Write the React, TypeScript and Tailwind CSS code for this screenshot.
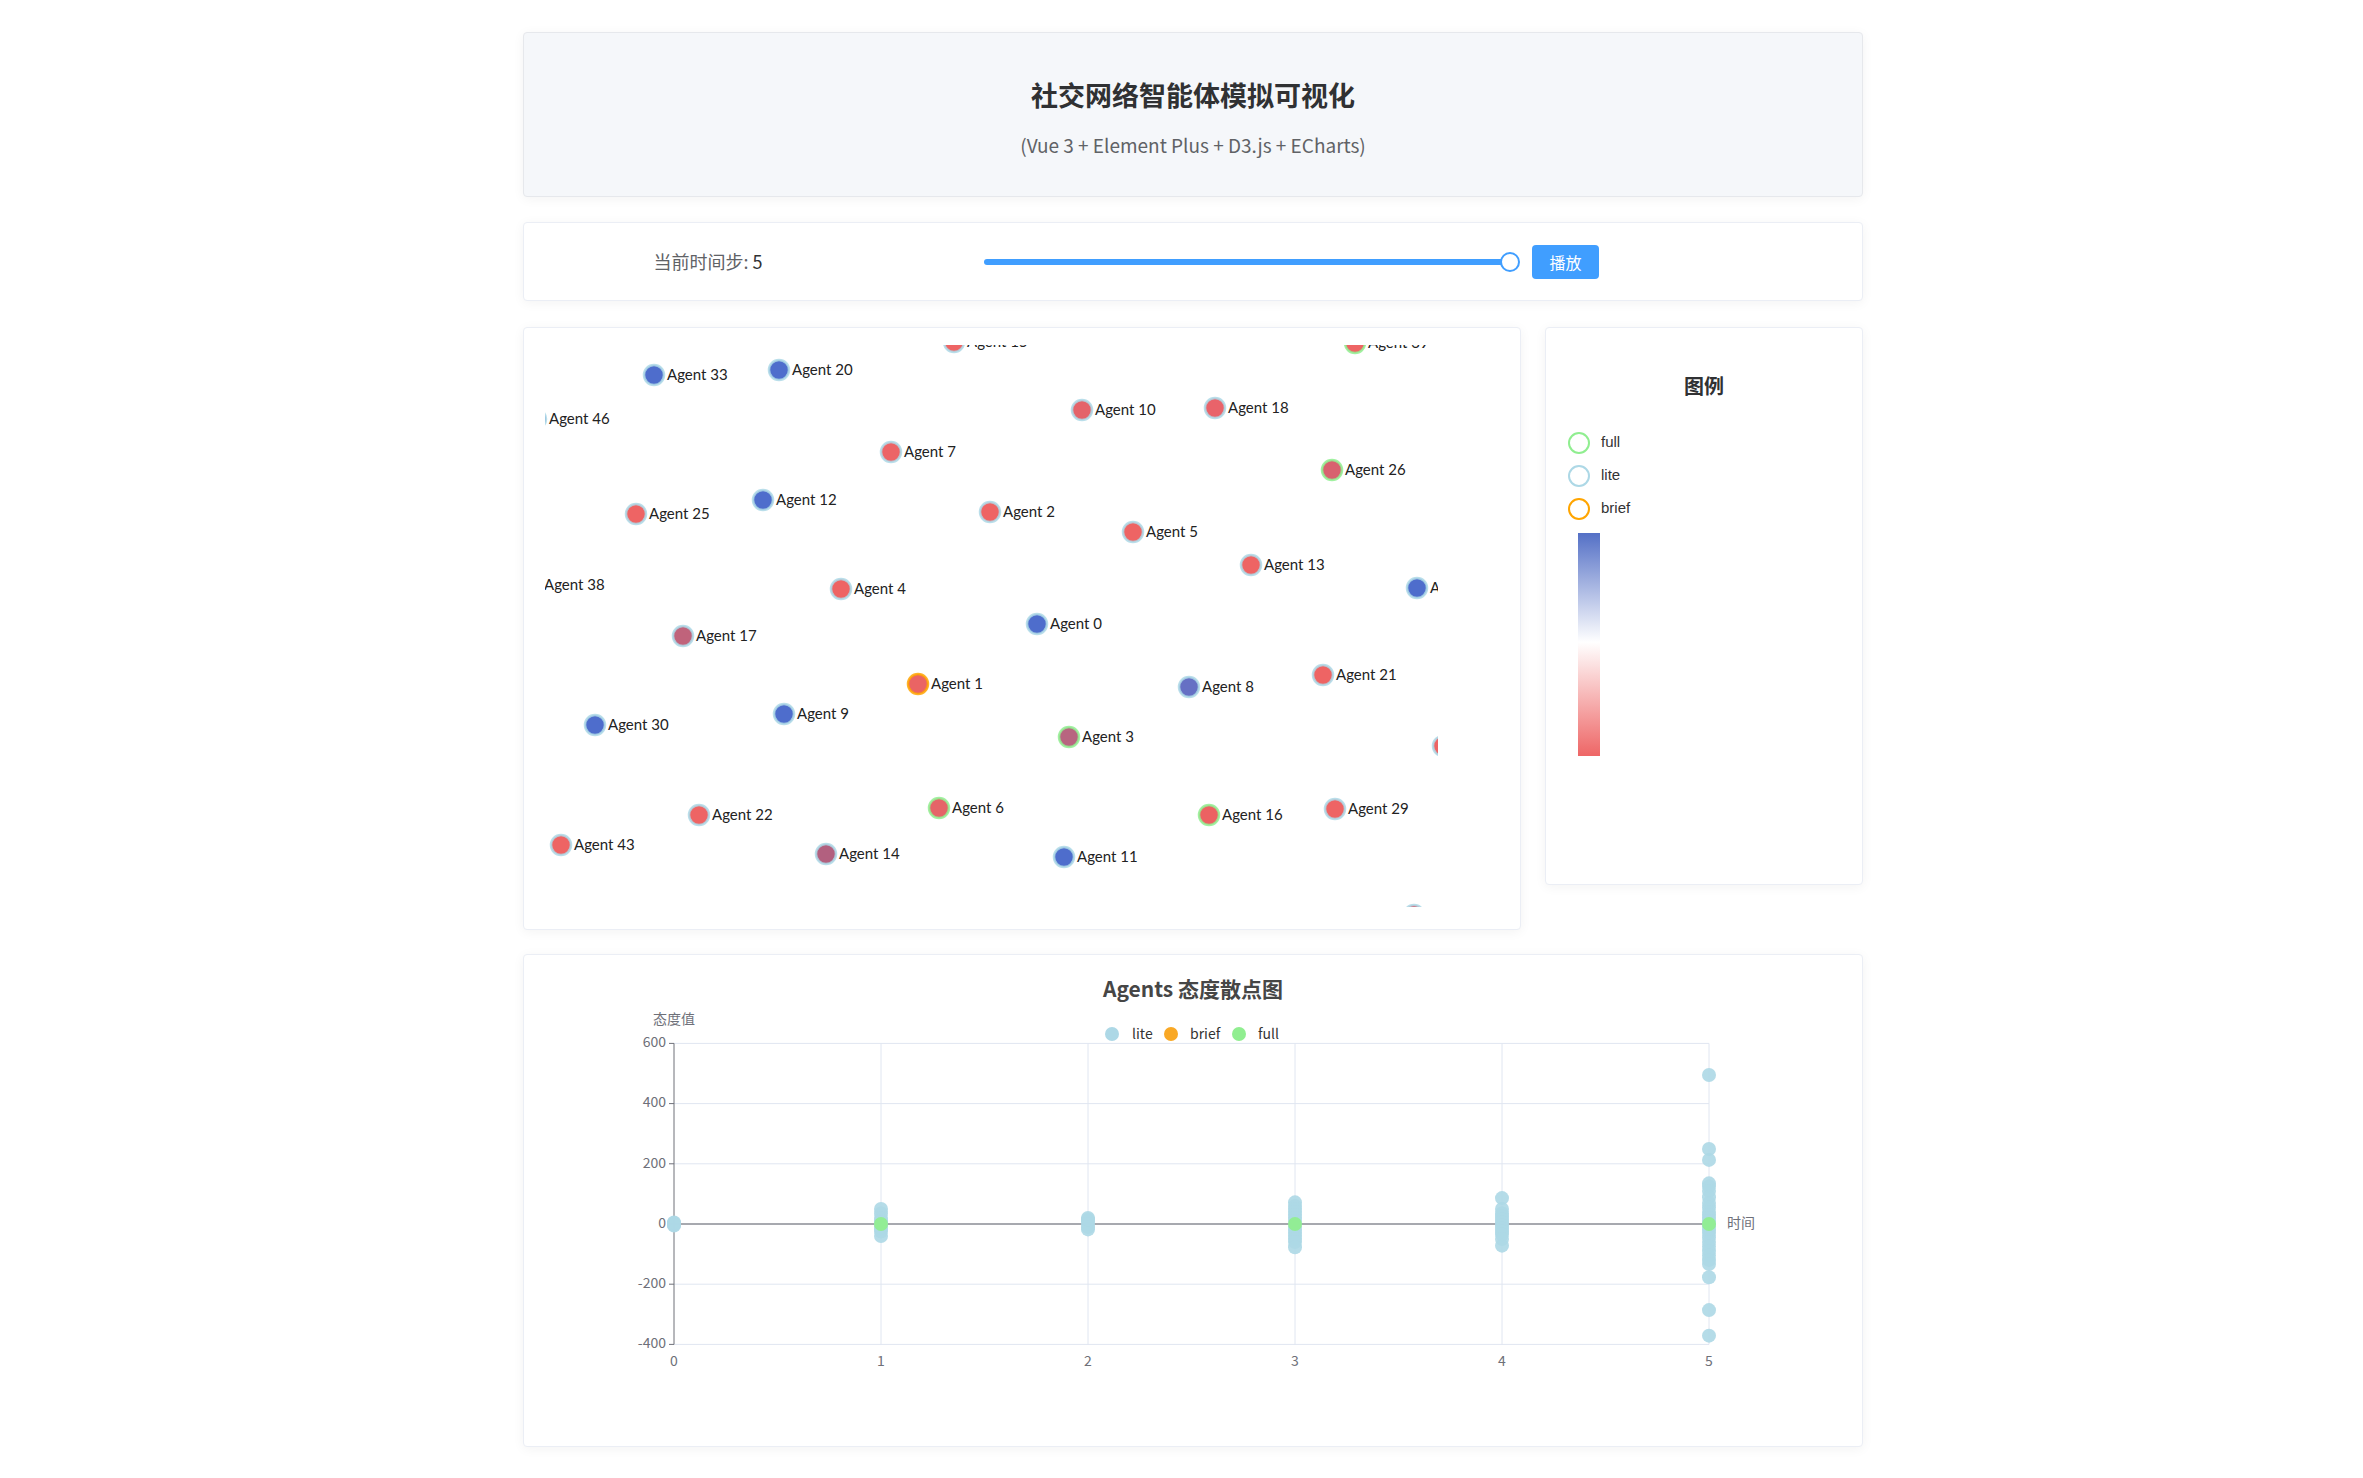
import React from 'react'

type Node = { id: number | string; x: number; y: number; fill: string; stroke: string }

const BLUE = '#4e6dcc'
const RED = '#ee6464'
const LITE = '#add8e6'
const FULL = '#90ee90'
const BRIEF = '#ffa500'

const nodes: Node[] = [
  { id: 15, x: 409, y: -3, fill: RED, stroke: LITE },
  { id: 39, x: 810, y: -2, fill: RED, stroke: FULL },
  { id: 33, x: 109, y: 30, fill: BLUE, stroke: LITE },
  { id: 20, x: 234, y: 25, fill: BLUE, stroke: LITE },
  { id: 46, x: -9, y: 74, fill: BLUE, stroke: LITE },
  { id: 10, x: 537, y: 65, fill: '#e4636a', stroke: LITE },
  { id: 18, x: 670, y: 63, fill: '#e9636a', stroke: LITE },
  { id: 7, x: 346, y: 107, fill: '#ec6467', stroke: LITE },
  { id: 26, x: 787, y: 125, fill: '#d8616f', stroke: FULL },
  { id: 25, x: 91, y: 169, fill: RED, stroke: LITE },
  { id: 12, x: 218, y: 155, fill: BLUE, stroke: LITE },
  { id: 2, x: 445, y: 167, fill: RED, stroke: LITE },
  { id: 5, x: 588, y: 187, fill: RED, stroke: LITE },
  { id: 13, x: 706, y: 220, fill: RED, stroke: LITE },
  { id: 38, x: -14, y: 240, fill: RED, stroke: LITE },
  { id: 4, x: 296, y: 244, fill: RED, stroke: LITE },
  { id: 44, x: 872, y: 243, fill: BLUE, stroke: LITE },
  { id: 0, x: 492, y: 279, fill: BLUE, stroke: LITE },
  { id: 17, x: 138, y: 291, fill: '#c0637b', stroke: LITE },
  { id: 1, x: 373, y: 339, fill: '#ea6464', stroke: BRIEF },
  { id: 8, x: 644, y: 342, fill: '#6670c4', stroke: LITE },
  { id: 21, x: 778, y: 330, fill: RED, stroke: LITE },
  { id: 30, x: 50, y: 380, fill: BLUE, stroke: LITE },
  { id: 9, x: 239, y: 369, fill: BLUE, stroke: LITE },
  { id: 3, x: 524, y: 392, fill: '#b86580', stroke: FULL },
  { id: 45, x: 898, y: 401, fill: RED, stroke: LITE },
  { id: 22, x: 154, y: 470, fill: RED, stroke: LITE },
  { id: 6, x: 394, y: 463, fill: '#e56468', stroke: FULL },
  { id: 16, x: 664, y: 470, fill: '#ec6162', stroke: FULL },
  { id: 29, x: 790, y: 464, fill: RED, stroke: LITE },
  { id: 43, x: 16, y: 500, fill: RED, stroke: LITE },
  { id: 14, x: 281, y: 509, fill: '#b2607f', stroke: LITE },
  { id: 11, x: 519, y: 512, fill: BLUE, stroke: LITE },
  { id: 40, x: 869, y: 570, fill: '#d8616f', stroke: LITE },
]

function Graph() {
  return (
    <svg width={893} height={562} className="block overflow-hidden">
      {nodes.map(n => (
        <g key={n.id}>
          <circle cx={n.x} cy={n.y} r={10} fill={n.fill} stroke={n.stroke} strokeWidth={2.5} strokeOpacity={0.85} />
          <text
            x={n.x + 13}
            y={n.y + 1}
            dominantBaseline="middle"
            fontSize={15}
            fill="#222"
            style={{ fontFamily: 'Lato, "Noto Sans", sans-serif' }}
          >
            Agent {n.id}
          </text>
        </g>
      ))}
    </svg>
  )
}

const series: { t: number; lite: number[]; full: number[] }[] = [
  { t: 0, lite: [0, -5, 5, 3, -3], full: [] },
  { t: 1, lite: [50, 35, 20, 10, 5, -5, -15, -25, -40], full: [0] },
  { t: 2, lite: [20, 10, 0, -10, -18, 15], full: [] },
  { t: 3, lite: [72, 60, 50, 40, 30, 20, 10, -10, -20, -30, -40, -50, -60, -77], full: [0] },
  { t: 4, lite: [86, 50, 35, 25, 15, 5, -5, -15, -25, -35, -50, -72], full: [] },
  {
    t: 5,
    lite: [495, 249, 213, 135, 125, 110, 89, 70, 55, 40, 30, 20, 10, 0, -10, -20, -30, -45, -60, -75, -90, -105, -120, -133, -177, -286, -371],
    full: [0],
  },
]

const X0 = 150
const XS = 207
const Y0 = 269
const YS = 60.2 / 200

function ScatterChart() {
  const font = { fontFamily: '"Noto Sans CJK SC", "Noto Sans", sans-serif' }
  const ticks = [600, 400, 200, 0, -200, -400]
  return (
    <svg width={1338} height={491} className="block" style={font}>
      <text x={669} y={36} textAnchor="middle" dominantBaseline="middle" fontSize={21} fontWeight={700} fill="#464646">
        Agents 态度散点图
      </text>
      <circle cx={588} cy={79} r={7} fill={LITE} />
      <text x={608} y={80} dominantBaseline="middle" fontSize={14} fill="#333">lite</text>
      <circle cx={647} cy={79} r={7} fill="#f9a825" />
      <text x={666} y={80} dominantBaseline="middle" fontSize={14} fill="#333">brief</text>
      <circle cx={715} cy={79} r={7} fill={FULL} />
      <text x={734} y={80} dominantBaseline="middle" fontSize={14} fill="#333">full</text>

      <text x={X0} y={65} textAnchor="middle" dominantBaseline="middle" fontSize={14} fill="#6e7079">态度值</text>

      {ticks.map(v => {
        const y = Y0 - v * YS
        return (
          <g key={v}>
            {v !== 0 && <line x1={X0} x2={X0 + XS * 5} y1={y} y2={y} stroke="#e0e6f1" />}
            <line x1={X0 - 5} x2={X0} y1={y} y2={y} stroke="#6e7079" />
            <text x={X0 - 8} y={y} textAnchor="end" dominantBaseline="middle" fontSize={14} fill="#6e7079">{v}</text>
          </g>
        )
      })}
      {[1, 2, 3, 4, 5].map(i => (
        <line key={i} x1={X0 + XS * i} x2={X0 + XS * i} y1={Y0 - 600 * YS} y2={Y0 + 400 * YS} stroke="#e0e6f1" />
      ))}
      {[0, 1, 2, 3, 4, 5].map(i => (
        <text key={i} x={X0 + XS * i} y={407} textAnchor="middle" dominantBaseline="middle" fontSize={14} fill="#6e7079">{i}</text>
      ))}

      <line x1={X0} x2={X0} y1={Y0 - 600 * YS} y2={Y0 + 400 * YS} stroke="#6e7079" />
      <line x1={X0} x2={X0 + XS * 5} y1={Y0} y2={Y0} stroke="#8a8c94" strokeWidth={1.5} />
      <text x={1203} y={Y0} dominantBaseline="middle" fontSize={14} fill="#6e7079">时间</text>

      {series.map(s =>
        s.lite.map((v, k) => (
          <circle key={`l${s.t}-${k}`} cx={X0 + XS * s.t} cy={Y0 - v * YS} r={7} fill={LITE} fillOpacity={0.9} />
        ))
      )}
      {series.map(s =>
        s.full.map((v, k) => (
          <circle key={`f${s.t}-${k}`} cx={X0 + XS * s.t} cy={Y0 - v * YS} r={7} fill={FULL} fillOpacity={0.95} />
        ))
      )}
    </svg>
  )
}

function LegendItem({ color, label }: { color: string; label: string }) {
  return (
    <div className="flex items-center h-[33px]">
      <span className="w-[22px] h-[22px] rounded-full border-2 bg-white" style={{ borderColor: color }} />
      <span className="ml-[11px] text-[15px] text-[#333]" style={{ fontFamily: '"Liberation Sans", Arial, sans-serif' }}>
        {label}
      </span>
    </div>
  )
}

export default function App() {
  const card = 'bg-white border border-[#ebeef5] rounded-[4px] shadow-[0_2px_12px_0_rgba(0,0,0,0.05)]'
  return (
    <div className="min-h-screen bg-white" style={{ fontFamily: '"Noto Sans CJK SC", "Noto Sans", sans-serif' }}>
      <div className="w-[1340px] ml-[523px] pt-[32px] pb-[31px]">
        <div className="h-[165px] rounded-[4px] border border-[#e6e8ec] bg-[#f5f7fa] shadow-[0_2px_12px_0_rgba(0,0,0,0.05)] flex flex-col items-center">
          <h1 className="mt-[42px] text-[27px] leading-[40px] font-bold text-[#303133]">社交网络智能体模拟可视化</h1>
          <p className="mt-[16px] text-[19px] leading-[28px] text-[#606266]">(Vue 3 + Element Plus + D3.js + ECharts)</p>
        </div>

        <div className={`${card} mt-[25px] h-[79px] flex items-center`}>
          <div className="ml-[20px] w-[328px] text-center text-[18px] text-[#606266]">当前时间步: <span className="text-[#303133]">5</span></div>
          <div className="ml-[112px] relative w-[526px] h-[6px] rounded-full bg-[#409eff]">
            <span className="absolute right-[-10px] top-[-7px] w-[20px] h-[20px] rounded-full bg-white border-2 border-[#409eff]" />
          </div>
          <button className="ml-[22px] w-[67px] h-[34px] rounded-[4px] bg-[#409eff] text-white text-[16px]">播放</button>
        </div>

        <div className="mt-[26px] flex items-start gap-[24px]">
          <div className={`${card} w-[998px] h-[603px] pl-[21px] pt-[17px]`}>
            <Graph />
          </div>
          <div className={`${card} w-[318px] h-[558px] pl-[22px]`}>
            <div className="mt-[43px] mb-[25px] text-center pr-[22px] text-[20px] leading-[30px] font-bold text-[#303133]">图例</div>
            <LegendItem color={FULL} label="full" />
            <LegendItem color={LITE} label="lite" />
            <LegendItem color={BRIEF} label="brief" />
            <div
              className="mt-[8px] ml-[10px] w-[22px] h-[223px]"
              style={{ background: 'linear-gradient(to bottom, #5470c6, #ffffff 49%, #ee6666)' }}
            />
          </div>
        </div>

        <div className={`${card} mt-[24px] h-[493px]`}>
          <ScatterChart />
        </div>
      </div>
    </div>
  )
}
